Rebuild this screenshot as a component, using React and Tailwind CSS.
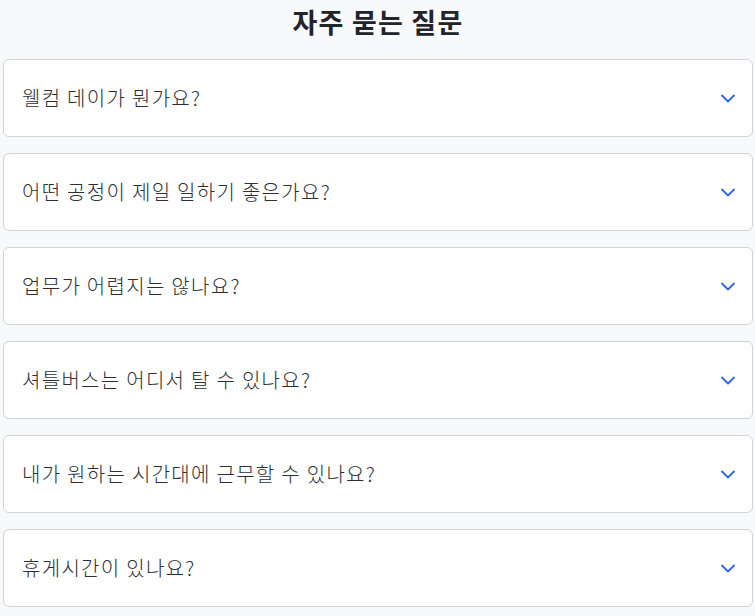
import React from 'react';

const faqs = [
    '웰컴 데이가 뭔가요?',
    '어떤 공정이 제일 일하기 좋은가요?',
    '업무가 어렵지는 않나요?',
    '셔틀버스는 어디서 탈 수 있나요?',
    '내가 원하는 시간대에 근무할 수 있나요?',
    '휴게시간이 있나요?',
];

const Chevron = () => (
    <svg width="16" height="16" viewBox="0 0 16 16" fill="none" stroke="#2f66dc" strokeWidth="1.8" strokeLinecap="round" strokeLinejoin="round">
        <path d="M2 5.5l6 6 6-6" />
    </svg>
);

const App = () => {
    return (
        <div className="min-h-screen bg-[#f8f9fa] pl-[3px] pr-[2px] pb-4" style={{ fontFamily: '"Noto Sans CJK KR", "Noto Sans", sans-serif' }}>
            <h2 className="text-center text-[27px] font-bold leading-[44px] tracking-[1.2px] text-[#212529] mb-[15px]">자주 묻는 질문</h2>
            <div className="flex flex-col gap-4">
                {faqs.map((q) => (
                    <button
                        key={q}
                        className="h-[78px] w-full flex items-center justify-between bg-white border border-[#ced4da] rounded-md pl-[18px] pr-4 text-left"
                    >
                        <span className="text-[20px] font-light tracking-[1.3px] text-[#2b2f33]">{q}</span>
                        <Chevron />
                    </button>
                ))}
            </div>
        </div>
    );
};

export default App;
